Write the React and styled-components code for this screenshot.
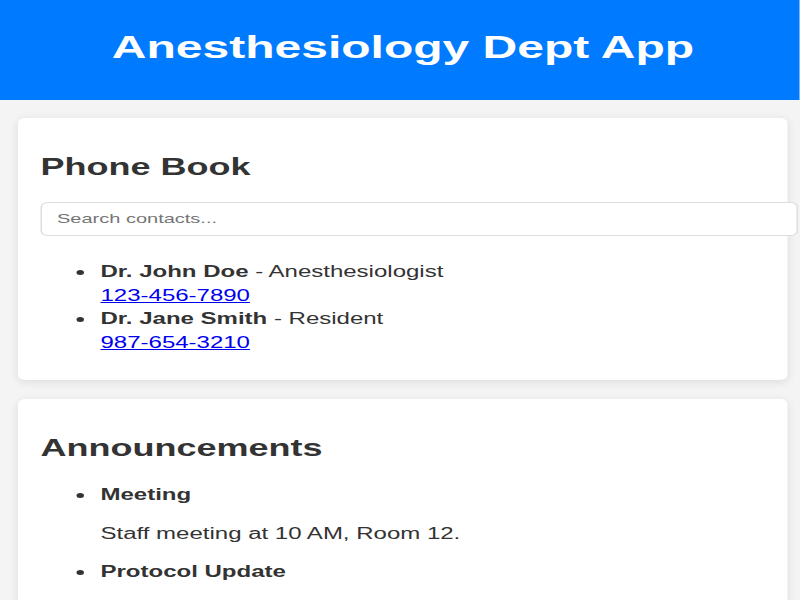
import React from "react";
import styled, { createGlobalStyle } from "styled-components";

const contacts = [
  { name: "Dr. John Doe", role: "Anesthesiologist", phone: "123-456-7890" },
  { name: "Dr. Jane Smith", role: "Resident", phone: "987-654-3210" },
];

const announcements = [
  { title: "Meeting", body: "Staff meeting at 10 AM, Room 12." },
  { title: "Protocol Update" },
];

const App = () => {
  return (
    <>
      <GlobalStyle />
      <Stage>
        <Header>
          <Title>Anesthesiology Dept App</Title>
        </Header>
        <Card>
          <SectionTitle>Phone Book</SectionTitle>
          <Search type="text" placeholder="Search contacts..." />
          <List>
            {contacts.map((c) => (
              <li key={c.phone}>
                <strong>{c.name}</strong> - {c.role}
                <br />
                <PhoneLink href={"tel:" + c.phone}>{c.phone}</PhoneLink>
              </li>
            ))}
          </List>
        </Card>
        <Card>
          <SectionTitle>Announcements</SectionTitle>
          <List>
            {announcements.map((a) => (
              <li key={a.title}>
                <strong>{a.title}</strong>
                {a.body && <Note>{a.body}</Note>}
              </li>
            ))}
          </List>
        </Card>
      </Stage>
    </>
  );
};

const GlobalStyle = createGlobalStyle`
html, body{
    margin: 0;
    padding: 0;
    overflow: hidden;
    background: #f4f4f4;
}
body{
    font-family: "Liberation Sans", Arial, sans-serif;
    color: #333;
}
`;

/* the page is drawn at a narrow width and stretched across the window */
const Stage = styled.div`
width: 533.33px;
transform: scaleX(1.5);
transform-origin: 0 0;
font-size: 16px;
line-height: 23.5px;
`;

const Header = styled.header`
box-sizing: border-box;
height: 100px;
padding: 29px 0 0 4px;
background-color: #007bff;
color: white;
text-align: center;
`;

const Title = styled.h1`
margin: 0;
font-size: 32px;
line-height: 36.8px;
font-weight: bold;
`;

const Card = styled.section`
margin: 18px 8px 19px 12px;
padding: 15px;
background: white;
border-radius: 5px;
box-shadow: 0 2px 8px rgba(0,0,0,0.1);
`;

const SectionTitle = styled.h2`
margin: 20px 0 21px;
font-size: 24px;
line-height: 28px;
font-weight: bold;
color: #333;
`;

const Search = styled.input`
display: block;
width: 100%;
margin: 0 0 24px;
padding: 8px 10px;
border: 1px solid #ddd;
border-radius: 5px;
font-family: "Liberation Sans", Arial, sans-serif;
font-size: 13.333px;
line-height: 16px;
color: #333;
outline: none;
&::placeholder{
    color: #757575;
}
`;

const List = styled.ul`
margin: 0 0 11px;
padding-left: 40px;
list-style: disc;
strong{
    font-weight: bold;
}
`;

const PhoneLink = styled.a`
color: #0000ee;
text-decoration: underline;
`;

const Note = styled.p`
margin: 15px 0;
`;

export default App;
